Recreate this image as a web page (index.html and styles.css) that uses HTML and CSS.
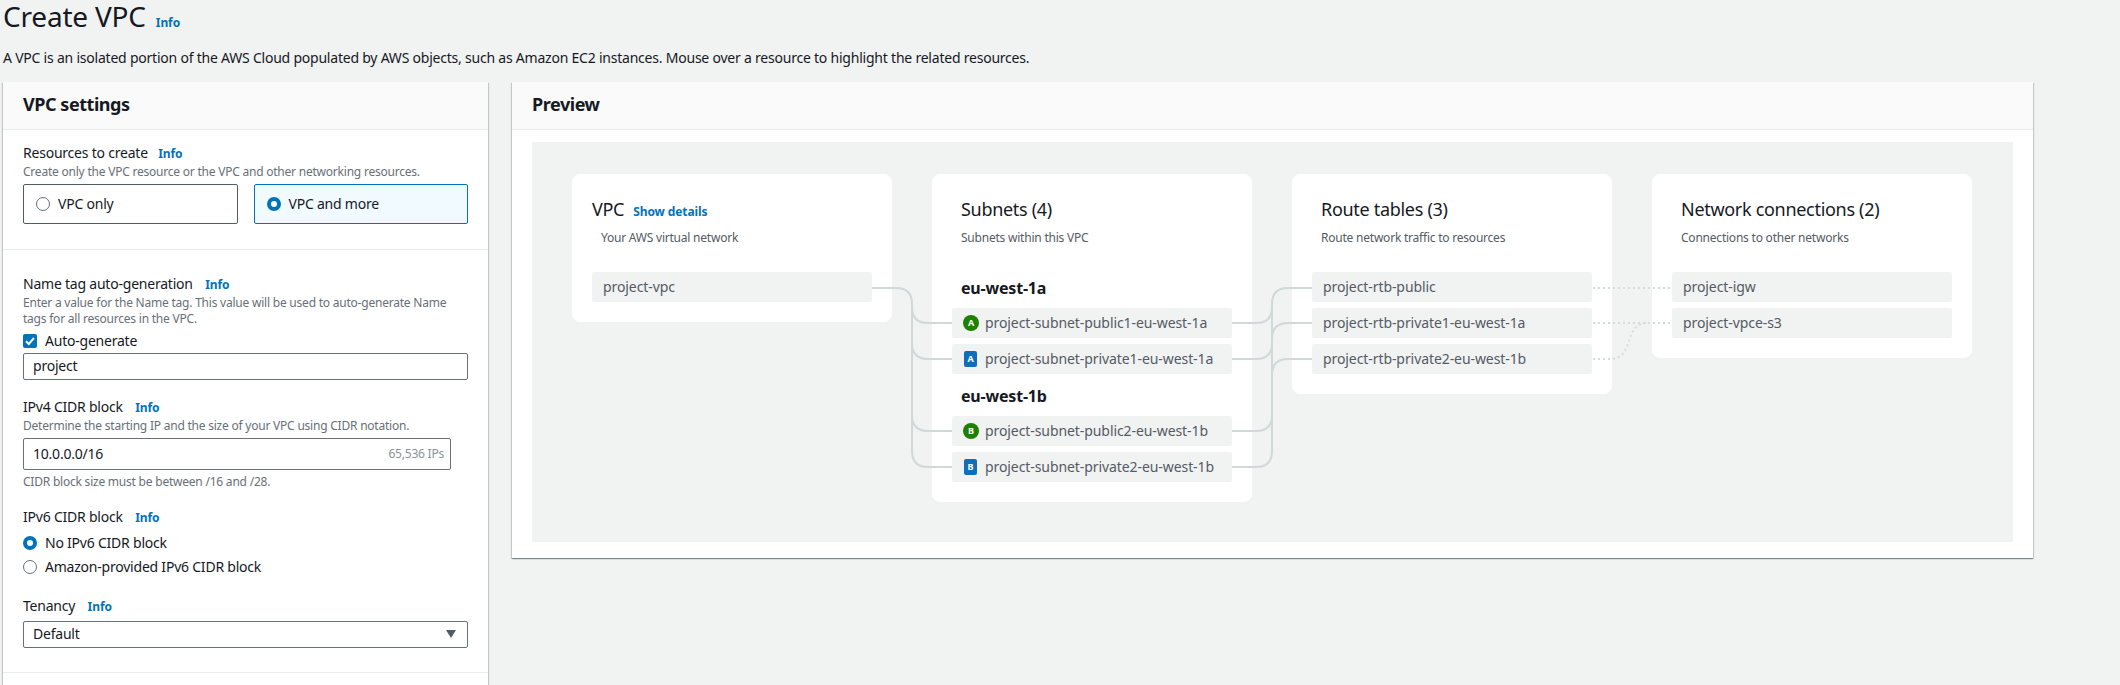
FILE: index.html
```html
<!DOCTYPE html>
<html lang="en">
<head>
<meta charset="utf-8">
<title>Create VPC</title>
<link rel="stylesheet" href="styles.css">
</head>
<body>
<main class="page">
  <header class="page-head">
    <h1 class="page-title">Create VPC</h1>
    <a class="info info-title">Info</a>
  </header>
  <p class="page-desc">A VPC is an isolated portion of the AWS Cloud populated by AWS objects, such as Amazon EC2 instances. Mouse over a resource to highlight the related resources.</p>
  <div class="columns">
    <section class="panel settings">
      <h2 class="panel-head">VPC settings</h2>
      <div class="form-section first">
        <div class="label">Resources to create <a class="info">Info</a></div>
        <p class="hint">Create only the VPC resource or the VPC and other networking resources.</p>
        <div class="tiles">
          <div class="tile"><span class="radio"></span>VPC only</div>
          <div class="tile selected"><span class="radio on"></span>VPC and more</div>
        </div>
      </div>
      <div class="form-section second">
        <div class="label">Name tag auto-generation <a class="info">Info</a></div>
        <p class="hint">Enter a value for the Name tag. This value will be used to auto-generate Name tags for all resources in the VPC.</p>
        <div class="check-row">
          <span class="checkbox"><svg width="14" height="14" viewBox="0 0 14 14"><path d="M3 7.2l2.8 2.8L11 4" fill="none" stroke="#fff" stroke-width="2"/></svg></span>
          Auto-generate
        </div>
        <div class="field name-field">project</div>
        <div class="label spaced">IPv4 CIDR block <a class="info">Info</a></div>
        <p class="hint">Determine the starting IP and the size of your VPC using CIDR notation.</p>
        <div class="field cidr-field"><span>10.0.0.0/16</span><span class="ips">65,536 IPs</span></div>
        <p class="hint constraint">CIDR block size must be between /16 and /28.</p>
        <div class="label spaced-v6">IPv6 CIDR block <a class="info">Info</a></div>
        <div class="radio-group">
          <div class="radio-row"><span class="radio on"></span>No IPv6 CIDR block</div>
          <div class="radio-row"><span class="radio"></span>Amazon-provided IPv6 CIDR block</div>
        </div>
        <div class="label spaced-ten">Tenancy <a class="info">Info</a></div>
        <div class="field select-field">
          <span>Default</span>
          <svg width="10" height="8" viewBox="0 0 10 8"><path d="M0 0h10L5 8z" fill="#545b64"/></svg>
        </div>
      </div>
      <div class="form-section tail"></div>
    </section>

    <section class="panel preview">
      <h2 class="panel-head">Preview</h2>
      <div class="preview-body">
        <div class="diagram">
          <div class="card">
            <div class="card-title vpc-title">VPC <a class="details">Show details</a></div>
            <p class="card-sub">Your AWS virtual network</p>
            <div class="rows">
              <div class="row vpc-row">project-vpc</div>
            </div>
          </div>
          <div class="card">
            <div class="card-title inset">Subnets (4)</div>
            <p class="card-sub">Subnets within this VPC</p>
            <h3 class="zone zone-a">eu-west-1a</h3>
            <div class="rows tight">
              <div class="row"><span class="badge pub">A</span>project-subnet-public1-eu-west-1a</div>
              <div class="row"><span class="badge priv">A</span>project-subnet-private1-eu-west-1a</div>
            </div>
            <h3 class="zone zone-b">eu-west-1b</h3>
            <div class="rows tight">
              <div class="row"><span class="badge pub">B</span>project-subnet-public2-eu-west-1b</div>
              <div class="row"><span class="badge priv">B</span>project-subnet-private2-eu-west-1b</div>
            </div>
          </div>
          <div class="card">
            <div class="card-title inset">Route tables (3)</div>
            <p class="card-sub">Route network traffic to resources</p>
            <div class="rows">
              <div class="row">project-rtb-public</div>
              <div class="row">project-rtb-private1-eu-west-1a</div>
              <div class="row">project-rtb-private2-eu-west-1b</div>
            </div>
          </div>
          <div class="card">
            <div class="card-title inset">Network connections (2)</div>
            <p class="card-sub">Connections to other networks</p>
            <div class="rows">
              <div class="row">project-igw</div>
              <div class="row">project-vpce-s3</div>
            </div>
          </div>
          <svg class="wires" width="1481" height="400" viewBox="532 142 1481 400">
            <g class="wire">
              <path d="M872 288H896Q912 288 912 304V307Q912 323 928 323H952"/>
              <path d="M912 304V343Q912 359 928 359H952"/>
              <path d="M912 304V415Q912 431 928 431H952"/>
              <path d="M912 304V451Q912 467 928 467H952"/>
              <path d="M1232 323H1256Q1272 323 1272 307V304Q1272 288 1288 288H1312"/>
              <path d="M1232 359H1256Q1272 359 1272 343V339Q1272 323 1288 323H1312"/>
              <path d="M1232 431H1256Q1272 431 1272 415V304"/>
              <path d="M1232 467H1256Q1272 467 1272 451V375Q1272 359 1288 359H1312"/>
            </g>
            <g class="wire dotted">
              <path d="M1593 288H1672"/>
              <path d="M1593 323H1672"/>
              <path d="M1593 359H1610C1636 359 1622 323 1648 323"/>
            </g>
          </svg>
        </div>
      </div>
    </section>
  </div>
</main>
</body>
</html>
```

FILE: styles.css
```css
* { box-sizing: border-box; }
html, body { margin: 0; height: 685px; overflow: hidden; }
body {
  background: #f1f2f2;
  color: #16191f;
  font-family: "Noto Sans", "Liberation Sans", sans-serif;
  font-size: 14px;
  line-height: 20px;
  letter-spacing: -.22px;
}
p, h1, h2, h3 { margin: 0; }
.page { padding-left: 3px; width: 2033px; }
.page-head { display: flex; align-items: baseline; height: 34px; }
.page-title { font-size: 28px; line-height: 32px; font-weight: 400; letter-spacing: -.2px; }
.info { color: #0073bb; font-size: 12px; font-weight: 700; line-height: 16px; letter-spacing: -.1px; }
.info-title { margin-left: 10px; }
.page-desc { margin-top: 14px; height: 20px; white-space: nowrap; }
.columns { display: flex; gap: 24px; align-items: flex-start; margin-top: 14px; }
.panel {
  background: #fff;
  box-shadow: 0 1px 1px 0 rgba(0,28,36,.3), 1px 1px 1px 0 rgba(0,28,36,.15), -1px 1px 1px 0 rgba(0,28,36,.15);
}
.settings { width: 485px; flex: none; }
.preview { width: 1521px; flex: none; }
.panel-head {
  height: 48px;
  padding: 11px 20px 0;
  background: #fafafa;
  border-bottom: 1px solid #eaeded;
  font-size: 18px;
  line-height: 22px;
  font-weight: 700;
  letter-spacing: -.45px;
}
.form-section { padding: 0 20px; border-bottom: 1px solid #eaeded; }
.form-section.first { padding-top: 13px; padding-bottom: 25px; }
.form-section.second { padding-top: 24px; padding-bottom: 24px; }
.form-section.tail { height: 60px; border-bottom: 0; }
.label { height: 20px; white-space: nowrap; }
.label .info { margin-left: 9px; }
.first .label .info { margin-left: 7px; }
.hint { margin-top: 1px; font-size: 12px; line-height: 16px; color: #687078; }
.tiles { display: flex; gap: 16px; margin-top: 4px; }
.tile {
  flex: 1;
  height: 40px;
  display: flex;
  align-items: center;
  gap: 8px;
  padding-left: 12px;
  border: 1px solid #545b64;
  border-radius: 2px;
}
.tile.selected { background: #f1faff; border-color: #0073bb; }
.radio {
  width: 14px;
  height: 14px;
  flex: none;
  border-radius: 50%;
  border: 1px solid #687078;
  background: #fff;
}
.radio.on { border: 4px solid #0073bb; }
.check-row { display: flex; align-items: center; gap: 8px; height: 16px; margin-top: 6px; }
.checkbox { width: 14px; height: 14px; flex: none; border-radius: 2px; background: #0073bb; display: flex; }
.field {
  display: flex;
  align-items: center;
  justify-content: space-between;
  padding: 0 9px 1px;
  border: 1px solid #687078;
  border-radius: 2px;
  background: #fff;
}
.name-field { margin-top: 4px; height: 27px; width: 445px; }
.spaced { margin-top: 17px; }
.cidr-field { margin-top: 4px; height: 32px; width: 428px; padding-right: 6px; padding-bottom: 0; }
.ips { font-size: 12px; color: #879596; }
.constraint { margin-top: 4px; }
.spaced-v6 { margin-top: 17px; }
.radio-group { margin-top: 4px; }
.radio-row { display: flex; align-items: center; gap: 8px; height: 24px; }
.spaced-ten { margin-top: 17px; }
.select-field { margin-top: 5px; height: 27px; width: 445px; padding-right: 11px; }
.preview-body { padding: 12px 20px 16px; }
.diagram {
  position: relative;
  display: flex;
  align-items: flex-start;
  gap: 40px;
  padding: 32px 40px 40px;
  background: #f1f2f2;
}
.card {
  width: 320px;
  flex: none;
  padding: 23px 20px 20px;
  background: #fff;
  border-radius: 8px;
}
.card-title { height: 24px; font-size: 18px; line-height: 24px; white-space: nowrap; letter-spacing: -.3px; }
.card-title.inset { padding-left: 9px; }
.vpc-title { display: flex; align-items: baseline; gap: 9px; }
.details { color: #0073bb; font-size: 12px; font-weight: 700; letter-spacing: -.1px; }
.card-sub { margin-top: 9px; padding-left: 9px; font-size: 12px; line-height: 16px; color: #545b64; }
.rows { display: flex; flex-direction: column; gap: 6px; margin-top: 26px; }
.rows.tight { margin-top: 10px; }
.row {
  height: 30px;
  display: flex;
  align-items: center;
  padding: 0 0 1px 11px;
  background: #f1f2f2;
  border-radius: 2px;
  color: #545b64;
  white-space: nowrap;
  letter-spacing: -.08px;
}
.badge {
  flex: none;
  display: flex;
  align-items: center;
  justify-content: center;
  color: #fff;
  font-size: 9px;
  font-weight: 700;
  line-height: 10px;
}
.badge.pub { width: 16px; height: 16px; margin-right: 6px; border-radius: 50%; background: #1d8102; }
.badge.priv { width: 13px; height: 16px; margin-left: 1px; margin-right: 8px; border-radius: 2px; background: #0f6fbb; }
.zone { padding-left: 9px; font-size: 16px; line-height: 20px; font-weight: 700; letter-spacing: -.2px; }
.zone-a { margin-top: 32px; }
.zone-b { margin-top: 12px; }
.wires { position: absolute; left: 0; top: 0; pointer-events: none; }
.wire path { fill: none; stroke: #d1d8d8; stroke-width: 2; }
.wire.dotted path { stroke: #d5dbdb; stroke-dasharray: 2 3; }
```
